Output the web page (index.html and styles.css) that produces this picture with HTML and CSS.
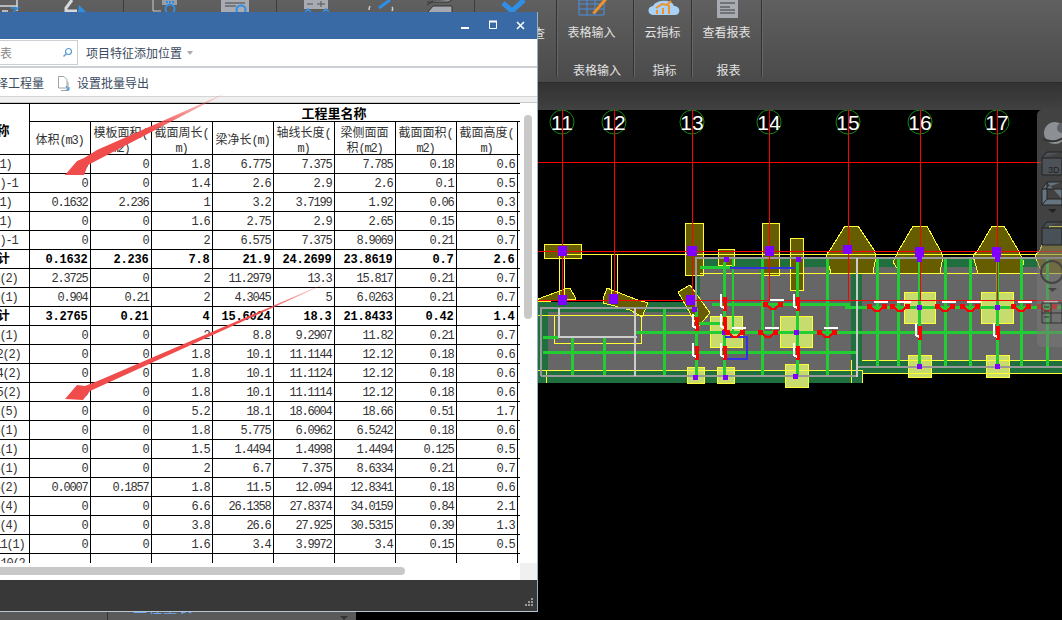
FILE: index.html
```html
<!DOCTYPE html>
<html lang="zh">
<head>
<meta charset="utf-8">
<title>工程量</title>
<link rel="stylesheet" href="styles.css">
</head>
<body>
<header class="ribbon">
  <div class="rib-group rib-main">
    <div class="rib-cell w124"><svg class="rib-svg" width="124" height="12" viewBox="0 0 124 12"><path d="M0 6H17M17 0V11M2 11H8" fill="none" stroke="#d5d8dc" stroke-width="1.500"/><path d="M11 8H18L13 12" fill="none" stroke="#2d8fe8" stroke-width="1.500"/><path d="M72 0L66 8V11H77" fill="none" stroke="#d5d8dc" stroke-width="3"/><path d="M79 5L86 12H78Z" fill="#2d8fe8"/></svg></div>
    <div class="rib-cell w153"><svg class="rib-svg" width="153" height="12" viewBox="124 0 153 12"><path d="M153 0V11H161" fill="none" stroke="#ccc"/><rect x="162" y="0" width="15" height="5" fill="#9a9ea6"/><circle cx="170" cy="9" r="4.500" fill="none" stroke="#2d8fe8" stroke-width="2"/><path d="M166 1h2v2h-2zM169 1h2v2h-2zM172 1h2v2h-2z" fill="#2d8fe8"/><rect x="221" y="0" width="28" height="12" fill="#a8abb2"/><path d="M225 3H245M225 6H236" stroke="#444"/><circle cx="241" cy="10" r="4.500" fill="none" stroke="#2d8fe8" stroke-width="2"/></svg></div>
    <div class="rib-cell w90"><svg class="rib-svg" width="90" height="12" viewBox="277 0 90 12"><rect x="304" y="0" width="24" height="9" fill="#a8abb2"/><path d="M307 4H313M317 4H325M321 1V7" stroke="#555"/><path d="M305 12L308 9L311 12M323 12L326 9L329 12" fill="none" stroke="#2d8fe8" stroke-width="1.500"/></svg></div>
    <div class="rib-cell w108"><svg class="rib-svg" width="108" height="12" viewBox="367 0 108 12"><path d="M370 6C369 8 369 9 369 10M392 7C393 8 393 9 392 11" fill="none" stroke="#ccc" stroke-width="1.500"/><path d="M390 0L379 8" stroke="#2d8fe8" stroke-width="3"/><path d="M427 2H448L452 0M427 5L433 1M428 12L433 6H452V12" fill="#a5a8ae" stroke="#333"/></svg></div>
    <div class="rib-cell w82"><svg class="rib-svg" width="58" height="12" viewBox="475 0 58 12"><path d="M503 3L512 11L524 0" fill="none" stroke="#2d8fe8" stroke-width="5"/></svg></div>
    <div class="rib-side-label">查</div>
  </div>
  <section class="rib-group g-table">
    <div class="rib-icon"><svg width="30" height="16" viewBox="0 0 30 16"><path d="M1 0H26V15H1ZM1 4H26M1 9H26M9 0V15M17 0V15" fill="none" stroke="#4a8ee0"/><path d="M14 13L25 0H29L17 14Z" fill="#f0912a"/></svg></div>
    <div class="rib-text">表格输入</div>
    <div class="rib-group-name">表格输入</div>
  </section>
  <section class="rib-group g-index">
    <div class="rib-icon"><svg width="32" height="16" viewBox="0 0 32 16"><path d="M5 15C-1 15 -1 6 5 6C7 0 24 -2 26 6C33 6 33 15 27 15Z" fill="#a9d0f5"/><path d="M9 14V10M15 14V8M21 14V5M8 8L14 4L19 5L23 1" fill="none" stroke="#f0912a" stroke-width="2"/></svg></div>
    <div class="rib-text">云指标</div>
    <div class="rib-group-name">指标</div>
  </section>
  <section class="rib-group g-report">
    <div class="rib-icon"><svg width="21" height="18" viewBox="0 0 21 18"><rect width="21" height="18" fill="#a8abb2" /><path d="M3 3H18M3 7H13M3 10H18M3 13H18" stroke="#3d3d3d"/></svg></div>
    <div class="rib-text">查看报表</div>
    <div class="rib-group-name">报表</div>
  </section>
</header>
<div class="band"></div>
<main class="stage">
  <svg class="cad" width="1062" height="510" viewBox="0 110 1062 510">
    <defs>
      <g id="mh"><path d="M-10 1H-5M5 1H10" fill="none" stroke="#f00" stroke-width="5"/><path d="M-5 3L-2 6H2L5 3" fill="none" stroke="#f00" stroke-width="2"/><path d="M-3 -3H11" stroke="#fff" stroke-width="2"/></g>
      <g id="mv"><path d="M1 -6V8" stroke="#f00" stroke-width="4"/><path d="M-3 -9V3L0 5" fill="none" stroke="#fff" stroke-width="2"/></g>
    </defs>
    <!-- slabs -->
    <rect class="slab-edge" x="538" y="302" width="324" height="81"/>
    <rect class="slab-edge" x="695" y="258" width="367" height="115"/>
    <rect class="slab" x="548" y="312" width="303" height="59"/>
    <rect class="slab" x="700" y="267" width="151" height="104"/>
    <rect class="slab" x="862" y="267" width="200" height="93"/>
    <!-- footings -->
    <g class="foot">
      <rect x="710" y="316" width="32" height="31"/><rect x="780" y="316" width="32" height="31"/>
      <rect x="904" y="292" width="31" height="31"/><rect x="981" y="292" width="32" height="31"/>
      <rect x="687" y="367" width="17" height="16"/><rect x="717" y="367" width="17" height="16"/>
      <rect x="785" y="364" width="23" height="23"/><rect x="908" y="355" width="23" height="22"/><rect x="986" y="355" width="23" height="22"/>
    </g>
    <!-- olive columns -->
    <g class="olive">
      <polygon points="538,299 565,289 570,288 576,299 538,302"/>
      <polygon points="603,299 607,288 635,299 648,303 642,317 630,310 603,303"/>
      <polygon points="678,292 690,285 710,313 698,327"/>
      <rect x="544" y="244" width="37" height="14"/>
      <rect x="685" y="223" width="18" height="52"/>
      <rect x="762" y="223" width="17" height="52"/>
      <rect x="790" y="238" width="13" height="52"/>
      <rect x="718" y="249" width="16" height="16"/>
      <polygon points="845,226 858,226 874,250 876,256 873,273 831,273 826,255 830,250"/>
      <polygon points="913,226 927,226 940,250 943,256 940,273 900,273 893,262 899,250"/>
      <polygon points="992,226 1004,226 1018,250 1024,262 1020,273 978,273 973,256 978,250"/>
      <polygon points="1050,226 1062,226 1062,273 1042,273 1035,256 1040,250"/>
    </g>
    <!-- thin yellow -->
    <g class="yl">
      <path d="M562 254H1062M559 254V300M564 254V300M611 254V300M617 254V300M614 254V300"/>
      <path d="M538 315H695M554 315V343H641V315M538 370H862V383M862 360H1062M862 373H1062M851 360V383"/>
      <path d="M700 273H1040M546 370V383"/>
    </g>
    <!-- beams -->
    <g class="beam">
      <path d="M572 338V376M604 338V376M664 308V376M696 308V376M724 262V376M762 258V376M797 258V376M827 258V376M877 258V367M898 258V367M919 258V367M945 258V367M970 258V367M997 258V367M1021 258V367M1047 258V367"/>
      <path d="M543 352H857M635 332H1062M712 304H850M845 307H1062M700 267H730M696 323H724M543 337H559"/>
    </g>
    <path class="beam-thin" d="M733 258V332M773 303V332"/>
    <path class="blue" d="M725 337H747V359H725M730 268H795"/>
    <!-- gray outlines -->
    <path class="outline" d="M541 376V308H696V258H1062M541 376H858M858 367H1062"/>
    <path class="outline-light" d="M559 308V337H637M635 308V376M857 258V377"/>
    <!-- axes -->
    <g class="redline">
      <path d="M562 110V300M614 110V300M692 110V300M769 110V300M848 110V300M920 110V300M997 110V300"/>
      <path d="M538 162H1062M538 251H1062M538 300H1062"/>
    </g>
    <g class="purple">
      <rect x="558" y="246" width="9" height="10"/><rect x="558" y="295" width="9" height="10"/>
      <rect x="609" y="294" width="9" height="10"/><rect x="687" y="246" width="10" height="10"/>
      <rect x="686" y="295" width="9" height="10"/><rect x="692" y="307" width="5" height="5"/>
      <rect x="765" y="246" width="9" height="10"/><rect x="724" y="257" width="5" height="5"/>
      <rect x="796" y="257" width="5" height="5"/><rect x="843" y="245" width="9" height="9"/>
      <rect x="915" y="247" width="9" height="10"/><rect x="992" y="247" width="9" height="10"/>
      <rect x="917" y="257" width="5" height="5"/><rect x="995" y="257" width="5" height="5"/>
      <rect x="917" y="305" width="5" height="5"/><rect x="995" y="305" width="5" height="5"/>
      <rect x="722" y="330" width="5" height="5"/><rect x="794" y="330" width="5" height="5"/>
      <rect x="693" y="375" width="5" height="5"/><rect x="723" y="375" width="5" height="5"/>
      <rect x="793" y="374" width="5" height="5"/><rect x="917" y="364" width="5" height="5"/><rect x="995" y="364" width="5" height="5"/>
    </g>
    <use href="#mv" x="696" y="323"/><use href="#mv" x="696" y="352"/>
    <use href="#mv" x="724" y="303"/><use href="#mv" x="724" y="323"/><use href="#mv" x="724" y="352"/>
    <use href="#mv" x="797" y="303"/><use href="#mv" x="797" y="352"/>
    <use href="#mh" x="735" y="331"/><use href="#mh" x="768" y="331"/>
    <use href="#mh" x="773" y="303"/><use href="#mh" x="827" y="331"/>
    <use href="#mh" x="877" y="305"/><use href="#mh" x="900" y="305"/><use href="#mh" x="945" y="305"/>
    <use href="#mh" x="970" y="305"/><use href="#mh" x="1021" y="305"/><use href="#mh" x="1047" y="305"/>
    <use href="#mv" x="919" y="332"/><use href="#mv" x="997" y="332"/>
    <g class="axis">
      <circle cx="562" cy="122" r="12"/><text x="562" y="130">11</text>
      <circle cx="614" cy="122" r="12"/><text x="614" y="130">12</text>
      <circle cx="692" cy="122" r="12"/><text x="692" y="130">13</text>
      <circle cx="769" cy="122" r="12"/><text x="769" y="130">14</text>
      <circle cx="848" cy="122" r="12"/><text x="848" y="130">15</text>
      <circle cx="920" cy="122" r="12"/><text x="920" y="130">16</text>
      <circle cx="997" cy="122" r="12"/><text x="997" y="130">17</text>
    </g>
    <path class="redline" d="M562 110V134M614 110V134M692 110V134M769 110V134M848 110V134M920 110V134M997 110V134"/>
  </svg>
  <aside class="side-panel">
    <svg width="25" height="237" viewBox="0 0 25 237">
      <circle cx="18" cy="23" r="11" fill="#8c8f94"/><circle cx="25" cy="18" r="5" fill="#5d6066"/><path d="M6 29Q16 34 26 28" fill="none" stroke="#333" stroke-width="2"/>
      <path d="M5 48H25V65H5ZM5 48L10 42H25" fill="#4d5158" stroke="#222"/><text class="panel-3d" x="11" y="63">3D</text>
      <path d="M5 79H25V95H5ZM5 79L10 72H25M10 72V89H25M5 95L10 89" fill="#667480" stroke="#222"/>
      <path d="M11 99H20L15.500 103Z" fill="#222"/>
      <path d="M5 118H25V135H5ZM5 118L10 112H25" fill="#485058" stroke="#222"/>
      <circle cx="15" cy="162" r="11" fill="none" stroke="#444" stroke-width="2"/>
      <path d="M11 178H20L15.500 182Z" fill="#444"/>
      <path d="M5 193H25V213H5ZM5 203H25M14 193V213M7 197H12M7 201H12M7 207H12" fill="none" stroke="#333"/>
    </svg>
  </aside>
  <div class="under-strip">
    <span class="under-sep"></span>
    <span class="under-tab">工程量表</span>
    <span class="under-caret"></span>
  </div>
</main>

<section class="window">
  <div class="title-bar">
    <svg class="win-ctl" width="68" height="12" viewBox="0 0 68 12"><path d="M0 8H8" stroke="#fff" stroke-width="2"/><path d="M28.500 1.500H35.500V8.500H28.500Z" fill="none" stroke="#fff"/><path d="M28 1.500H36" stroke="#fff" stroke-width="2"/><path d="M56 2L63 9M63 2L56 9" stroke="#fff" stroke-width="1.500"/></svg>
  </div>
  <div class="tool-row">
    <div class="search-box"><span class="search-text">表</span><svg width="11" height="11" viewBox="0 0 11 11"><circle cx="6.500" cy="4.500" r="3" fill="none" stroke="#5a9bd5" stroke-width="1.200"/><path d="M4 7L1.500 9.500" stroke="#5a9bd5" stroke-width="1.500"/></svg></div>
    <span class="tool-label">项目特征添加位置</span>
    <span class="caret"></span>
  </div>
  <div class="tool-row tool-second">
    <span class="tool-label clipped">择工程量</span>
    <svg class="doc-icon" width="13" height="17" viewBox="0 0 13 17"><path d="M1.500 1.500H7L10 4.500V13H1.500Z" fill="#fff" stroke="#a0a4a8"/><path d="M4 15.500H11V7" fill="none" stroke="#a0a4a8"/><path d="M9 11L12 15M12 12V15H9" fill="none" stroke="#3b8ed8"/></svg>
    <span class="tool-label">设置批量导出</span>
  </div>
  <div class="strip"></div>
  <div class="sheet">
    <div class="table-clip">
      <table class="grid">
        <colgroup><col class="c-name"><col class="c"><col class="c"><col class="c"><col class="c"><col class="c"><col class="c"><col class="c"><col class="c"><col class="c"></colgroup>
        <thead>
          <tr class="h1"><th class="th-name" rowspan="2"><b>称</b></th><th class="th-merge" colspan="9">工程里名称</th></tr>
          <tr class="h2"><th>体积<span class="lat">(m3)</span></th><th>模板面积<span class="lat">(</span><br><span class="lat">m2)</span></th><th>截面周长<span class="lat">(</span><br><span class="lat">m)</span></th><th>梁净长<span class="lat">(m)</span></th><th>轴线长度<span class="lat">(</span><br><span class="lat">m)</span></th><th>梁侧面面<br>积<span class="lat">(m2)</span></th><th>截面面积<span class="lat">(</span><br><span class="lat">m2)</span></th><th>截面高度<span class="lat">(</span><br><span class="lat">m)</span></th><th></th></tr>
        </thead>
        <tbody>
          <tr><td class="n e12">(1)</td><td>0</td><td>0</td><td>1.8</td><td>6.775</td><td>7.375</td><td>7.785</td><td>0.18</td><td>0.6</td><td></td></tr>
          <tr><td class="n e18">)-1</td><td>0</td><td>0</td><td>1.4</td><td>2.6</td><td>2.9</td><td>2.6</td><td>0.1</td><td>0.5</td><td></td></tr>
          <tr><td class="n e12">(1)</td><td>0.1632</td><td>2.236</td><td>1</td><td>3.2</td><td>3.7199</td><td>1.92</td><td>0.06</td><td>0.3</td><td></td></tr>
          <tr><td class="n e12">(1)</td><td>0</td><td>0</td><td>1.6</td><td>2.75</td><td>2.9</td><td>2.65</td><td>0.15</td><td>0.5</td><td></td></tr>
          <tr><td class="n e18">)-1</td><td>0</td><td>0</td><td>2</td><td>6.575</td><td>7.375</td><td>8.9069</td><td>0.21</td><td>0.7</td><td></td></tr>
          <tr class="sum"><td class="n e10">计</td><td>0.1632</td><td>2.236</td><td>7.8</td><td>21.9</td><td>24.2699</td><td>23.8619</td><td>0.7</td><td>2.6</td><td></td></tr>
          <tr><td class="n e18">2(2)</td><td>2.3725</td><td>0</td><td>2</td><td>11.2979</td><td>13.3</td><td>15.817</td><td>0.21</td><td>0.7</td><td></td></tr>
          <tr><td class="n e18">9(1)</td><td>0.904</td><td>0.21</td><td>2</td><td>4.3045</td><td>5</td><td>6.0263</td><td>0.21</td><td>0.7</td><td></td></tr>
          <tr class="sum"><td class="n e10">计</td><td>3.2765</td><td>0.21</td><td>4</td><td>15.6024</td><td>18.3</td><td>21.8433</td><td>0.42</td><td>1.4</td><td></td></tr>
          <tr><td class="n e18">(1)</td><td>0</td><td>0</td><td>2</td><td>8.8</td><td>9.2907</td><td>11.82</td><td>0.21</td><td>0.7</td><td></td></tr>
          <tr><td class="n e21">2(2)</td><td>0</td><td>0</td><td>1.8</td><td>10.1</td><td>11.1144</td><td>12.12</td><td>0.18</td><td>0.6</td><td></td></tr>
          <tr><td class="n e21">4(2)</td><td>0</td><td>0</td><td>1.8</td><td>10.1</td><td>11.1124</td><td>12.12</td><td>0.18</td><td>0.6</td><td></td></tr>
          <tr><td class="n e21">5(2)</td><td>0</td><td>0</td><td>1.8</td><td>10.1</td><td>11.1114</td><td>12.12</td><td>0.18</td><td>0.6</td><td></td></tr>
          <tr><td class="n e18">2(5)</td><td>0</td><td>0</td><td>5.2</td><td>18.1</td><td>18.6004</td><td>18.66</td><td>0.51</td><td>1.7</td><td></td></tr>
          <tr><td class="n e18">8(1)</td><td>0</td><td>0</td><td>1.8</td><td>5.775</td><td>6.0962</td><td>6.5242</td><td>0.18</td><td>0.6</td><td></td></tr>
          <tr><td class="n e18">1(1)</td><td>0</td><td>0</td><td>1.5</td><td>1.4494</td><td>1.4998</td><td>1.4494</td><td>0.125</td><td>0.5</td><td></td></tr>
          <tr><td class="n e18">5(1)</td><td>0</td><td>0</td><td>2</td><td>6.7</td><td>7.375</td><td>8.6334</td><td>0.21</td><td>0.7</td><td></td></tr>
          <tr><td class="n e18">5(2)</td><td>0.0007</td><td>0.1857</td><td>1.8</td><td>11.5</td><td>12.094</td><td>12.8341</td><td>0.18</td><td>0.6</td><td></td></tr>
          <tr><td class="n e18">6(4)</td><td>0</td><td>0</td><td>6.6</td><td>26.1358</td><td>27.8374</td><td>34.0159</td><td>0.84</td><td>2.1</td><td></td></tr>
          <tr><td class="n e18">7(4)</td><td>0</td><td>0</td><td>3.8</td><td>26.6</td><td>27.925</td><td>30.5315</td><td>0.39</td><td>1.3</td><td></td></tr>
          <tr><td class="n e25">11(1)</td><td>0</td><td>0</td><td>1.6</td><td>3.4</td><td>3.9972</td><td>3.4</td><td>0.15</td><td>0.5</td><td></td></tr>
          <tr class="cut"><td class="n e25">10(2</td><td></td><td></td><td></td><td></td><td></td><td></td><td></td><td></td><td></td></tr>
        </tbody>
      </table>
    </div>
    <div class="v-track"><div class="v-thumb"></div></div>
    <div class="h-track"><div class="h-thumb"></div></div>
    <div class="corner"></div>
  </div>
  <footer class="status">
    <svg class="grip" width="10" height="10" viewBox="0 0 10 10"><path d="M7 0h2v2H7zM4 3h2v2H4zM7 3h2v2H7zM1 6h2v2H1zM4 6h2v2H4zM7 6h2v2H7z" fill="#9a9a9a"/></svg>
  </footer>
  <svg class="arrows" width="538" height="600" viewBox="0 12 538 600">
    <defs>
      <linearGradient id="a1" gradientUnits="userSpaceOnUse" x1="228" y1="92" x2="150" y2="130"><stop offset="0" stop-color="#f04c4c" stop-opacity=".15"/><stop offset="1" stop-color="#f04c4c"/></linearGradient>
      <linearGradient id="a2" gradientUnits="userSpaceOnUse" x1="340" y1="277" x2="260" y2="312"><stop offset="0" stop-color="#f04c4c" stop-opacity=".15"/><stop offset="1" stop-color="#f04c4c"/></linearGradient>
    </defs>
    <polygon fill="url(#a1)" points="228,92 97,150 84,158 77,161 65,175 84,175 88,165"/>
    <polygon fill="url(#a2)" points="340,277 100,380 85,386 77,385 65,399 83,400 90,391"/>
  </svg>
</section>
</body>
</html>
```
FILE: styles.css
```css
* { box-sizing: border-box; }
html, body { margin: 0; padding: 0; }
body {
  position: relative;
  width: 1062px;
  height: 620px;
  overflow: hidden;
  background: #000;
  display: flex;
  flex-direction: column;
  font-family: "Noto Sans CJK SC", "Liberation Sans", sans-serif;
  font-size: 12px;
}

/* Ribbon */
.ribbon {
  height: 82px;
  flex: none;
  display: flex;
  background: linear-gradient(#606060, #4a4a4a);
  color: #e2e2e2;
  padding-bottom: 5px;
}
.rib-group {
  position: relative;
  flex: none;
  text-align: center;
  border-right: 1px solid #333;
  box-shadow: 1px 0 0 #666;
}
.rib-main { width: 557px; display: flex; }
.rib-cell { height: 100%; border-right: 1px solid #3d3d3d; }
.rib-svg { display: block; }
.w124 { width: 124px; }
.w153 { width: 153px; }
.w90 { width: 90px; border-right: 0; }
.w108 { width: 108px; }
.w82 { width: 58px; border-right: 0; }
.rib-side-label { flex: 1; padding-top: 23px; line-height: 20px; text-align: left; }
.g-table { width: 77px; }
.g-index { width: 58px; }
.g-report { width: 70px; }
.rib-icon { height: 18px; display: flex; justify-content: center; align-items: flex-start; }
.rib-text { margin-top: 4px; line-height: 20px; }
.rib-group-name { margin-top: 18px; line-height: 20px; }
.g-table .rib-icon { padding-right: 5px; }
.g-table .rib-text { padding-right: 7px; }
.g-table .rib-group-name { padding-left: 4px; }
.g-index .rib-icon { padding-left: 3px; }
.g-index .rib-group-name { padding-left: 4px; }
.g-report .rib-icon { padding-left: 2px; }
.g-report .rib-group-name { padding-left: 4px; }

.band {
  height: 28px;
  flex: none;
  background: linear-gradient(#323232, #414141);
  border-top: 1px solid #2c2c2c;
}

/* CAD canvas */
.stage { position: relative; flex: 1; background: #000; }
.cad { display: block; shape-rendering: crispEdges; }
.slab-edge { fill: #1f6f3f; }
.slab { fill: #666; }
.foot rect { fill: #c8dc6e; stroke: #ffff33; stroke-width: 1; }
.olive > * { fill: #665c00; stroke: #ffff33; stroke-width: 1; }
.yl path { fill: none; stroke: #ffff33; stroke-width: 1; }
.beam path { fill: none; stroke: #22cc33; stroke-width: 3; }
.beam-thin { fill: none; stroke: #22cc33; stroke-width: 2; }
.blue { fill: none; stroke: #3333dd; stroke-width: 2; }
.outline { fill: none; stroke: #999; stroke-width: 2; }
.outline-light { fill: none; stroke: #ccc; stroke-width: 2; }
.redline { fill: none; stroke: #f00; stroke-width: 1; }
.redline path { fill: none; }
.purple rect { fill: #8000ff; }
.axis circle { fill: #000; stroke: #0f8a0f; stroke-width: 1; shape-rendering: auto; }
.axis text {
  fill: #fff;
  font-family: "Liberation Sans", sans-serif;
  font-size: 21px;
  text-anchor: middle;
}

.side-panel {
  position: absolute;
  left: 1037px;
  top: 0;
  width: 25px;
  height: 237px;
  background: rgba(120, 120, 120, .55);
  border-radius: 5px 0 0 5px;
}
.side-panel svg { display: block; }
.panel-3d { font-family: "Liberation Sans", sans-serif; font-size: 9px; fill: #222; }

.under-strip {
  position: absolute;
  left: 0;
  bottom: 0;
  width: 356px;
  height: 8px;
  background: #5a5a5a;
  overflow: hidden;
  display: flex;
  align-items: flex-start;
}
.under-sep { width: 1px; height: 8px; margin-left: 107px; background: #333; }
.under-tab {
  flex: none;
  margin-left: 25px;
  margin-top: -16px;
  width: 60px;
  line-height: 20px;
  font-size: 14px;
  letter-spacing: 1px;
  color: #6aa5ee;
}
.under-caret {
  margin-left: 147px;
  margin-top: 4px;
  width: 0;
  height: 0;
  border: 4px solid transparent;
  border-top: 4px solid #333;
}

/* Window */
.window {
  position: absolute;
  left: 0;
  top: 12px;
  width: 538px;
  height: 600px;
  background: #fff;
  border-right: 1px solid #9ab0c8;
  border-bottom: 1px solid #b9c6d6;
  display: flex;
  flex-direction: column;
  overflow: hidden;
}
.title-bar {
  height: 27px;
  flex: none;
  background: #3a6aa5;
  display: flex;
  justify-content: flex-end;
  align-items: center;
  padding-right: 8px;
}
.win-ctl { display: block; }
.tool-row {
  height: 29px;
  flex: none;
  display: flex;
  align-items: center;
  background: #fff;
  color: #3a4a60;
  border-bottom: 2px solid #ccd0d5;
}
.tool-second { height: 29px; padding-top: 2px; border-bottom: 1px solid #d4d4d4; }
.search-box {
  width: 78px;
  height: 25px;
  margin-right: 8px;
  border: 1px solid #ccd0d5;
  border-left: 0;
  display: flex;
  align-items: center;
  justify-content: space-between;
  padding-right: 4px;
}
.search-text { color: #888; }
.tool-label { line-height: 18px; }
.caret {
  margin-left: 5px;
  width: 0;
  height: 0;
  border: 3px solid transparent;
  border-top: 4px solid #aaa;
  margin-top: 3px;
}
.clipped { margin-right: 13px; margin-left: -4px; width: 48px; overflow: hidden; white-space: nowrap; }
.doc-icon { margin-right: 7px; flex: none; }
.strip { height: 6px; flex: none; background: #f0f0f0; border-bottom: 1px solid #c8c8c8; }

.sheet {
  flex: none;
  height: 477px;
  display: grid;
  grid-template-columns: 520px 17px;
  grid-template-rows: 460px 17px;
  background: #fff;
}
.table-clip { overflow: hidden; }
.grid {
  border-collapse: collapse;
  table-layout: fixed;
  width: 609px;
  margin-left: -31px;
  color: #333;
}
.c-name { width: 60px; }
.c { width: 61px; }
.grid th, .grid td { border: 1px solid #000; padding: 0; overflow: hidden; }
.grid td {
  height: 19px;
  text-align: right;
  padding: 2px 2px 0 0;
  font-family: "Liberation Mono", "Noto Sans CJK SC", monospace;
  font-size: 12px;
  letter-spacing: -1.2px;
  line-height: 16px;
  white-space: nowrap;
  vertical-align: middle;
}
.sum td { font-weight: 700; color: #000; letter-spacing: -.2px; }
.grid td.n { border-left: 0; }
.grid td.e10 { padding-right: 19px; }
.grid td.e12 { padding-right: 17px; }
.grid td.e18 { padding-right: 11px; }
.grid td.e21 { padding-right: 8px; }
.grid td.e25 { padding-right: 4px; }
.grid th { font-weight: 400; font-size: 12px; line-height: 15px; color: #333; text-align: center; }
.lat { font-family: "Liberation Mono", monospace; letter-spacing: -1.2px; line-height: 10px; }
.grid th.th-merge {
  height: 18px;
  text-align: left;
  padding-left: 272px;
  font-size: 13px;
  line-height: 17px;
  font-weight: 700;
  color: #000;
}
.grid th.th-name { text-align: right; padding-right: 19px; font-size: 13px; border-left: 0; color: #000; }
.h2 th { height: 33px; padding-top: 1px; }
.cut td { height: 19px; }

.v-track { background: #fff; }
.v-thumb {
  width: 8px;
  height: 204px;
  margin: 12px 0 0 4px;
  background: #c8c8c8;
  border-radius: 4px;
}
.h-track { background: #fff; padding-top: 4px; }
.h-thumb { width: 405px; height: 8px; background: #c8c8c8; border-radius: 0 4px 4px 0; }
.corner { background: #f0f0f0; }

.status {
  flex: 1;
  background: #383838;
  display: flex;
  justify-content: flex-end;
  align-items: flex-end;
  padding: 0 3px 3px 0;
}
.grip { display: block; }
.arrows { position: absolute; left: 0; top: 0; pointer-events: none; }
```
